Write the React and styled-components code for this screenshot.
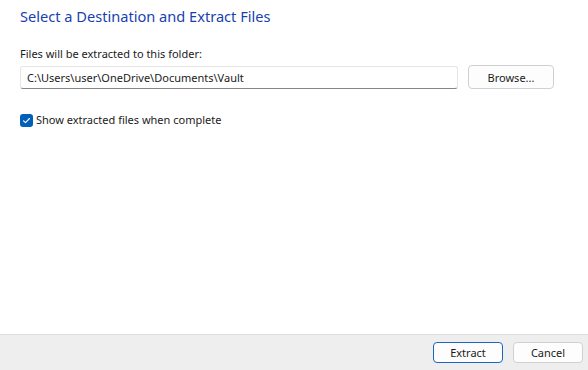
import React from 'react';
import styled, { createGlobalStyle } from 'styled-components';

const GlobalStyle = createGlobalStyle`
  html, body {
    margin: 0;
    padding: 0;
    background: #ffffff;
  }
  body {
    font-family: "Noto Sans", "Liberation Sans", sans-serif;
  }
`;

const Window = styled.div`
  width: 588px;
  height: 370px;
  display: flex;
  flex-direction: column;
  background: #ffffff;
  overflow: hidden;
`;

const Content = styled.div`
  flex: 1;
  display: flex;
  flex-direction: column;
  padding: 5px 20px 0 20px;
`;

const Title = styled.h1`
  margin: 0;
  font-size: 14.6px;
  font-weight: normal;
  line-height: 22px;
  color: #1a3fb0;
`;

const Label = styled.div`
  margin-top: 19px;
  font-size: 11px;
  line-height: 16px;
  color: #1b1b1b;
`;

const PathRow = styled.div`
  display: flex;
  align-items: center;
  gap: 10px;
  margin-top: 3px;
`;

const PathInput = styled.div`
  box-sizing: border-box;
  width: 438px;
  height: 23px;
  padding: 0 6px;
  display: flex;
  align-items: center;
  font-size: 11px;
  color: #1b1b1b;
  border: 1px solid #e5e5e5;
  border-bottom-color: #868686;
  border-radius: 3px;
`;

const Button = styled.button`
  box-sizing: border-box;
  width: ${p => p.$width || 70}px;
  height: ${p => p.$height || 24}px;
  padding: 0;
  font-family: inherit;
  font-size: 11px;
  color: #1b1b1b;
  background: #fdfdfd;
  border: 1px solid ${p => (p.$primary ? '#1a66c2' : '#d0d0d0')};
  border-radius: 4px;
`;

const CheckRow = styled.label`
  display: flex;
  align-items: center;
  gap: 3px;
  margin-top: 23px;
  font-size: 11px;
  line-height: 16px;
  color: #1b1b1b;
`;

const Box = styled.span`
  box-sizing: border-box;
  width: 13px;
  height: 13px;
  border-radius: 3px;
  background: #005fb8;
  display: flex;
  align-items: center;
  justify-content: center;
`;

const Footer = styled.div`
  height: 36px;
  box-sizing: border-box;
  background: #eeeeee;
  border-top: 1px solid #dcdcdc;
  display: flex;
  justify-content: flex-end;
  align-items: center;
  gap: 10px;
  padding: 0 5px 0 0;
`;

export default function App() {
  return (
    <>
      <GlobalStyle />
      <Window>
        <Content>
          <Title>Select a Destination and Extract Files</Title>
          <Label>Files will be extracted to this folder:</Label>
          <PathRow>
            <PathInput>C:\Users\user\OneDrive\Documents\Vault</PathInput>
            <Button $width={86}>Browse...</Button>
          </PathRow>
          <CheckRow>
            <Box>
              <svg width="9" height="9" viewBox="0 0 9 9">
                <path d="M1.5 4.8 L3.5 6.7 L7.5 2.5" fill="none" stroke="#fff" strokeWidth="1.1" strokeLinecap="round" strokeLinejoin="round" />
              </svg>
            </Box>
            Show extracted files when complete
          </CheckRow>
        </Content>
        <Footer>
          <Button $primary $width={70} $height={21}>Extract</Button>
          <Button $width={70} $height={21}>Cancel</Button>
        </Footer>
      </Window>
    </>
  );
}
